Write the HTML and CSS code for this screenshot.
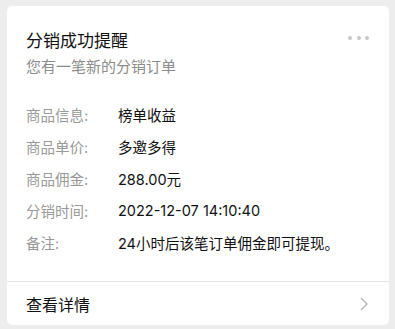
FILE: index.html
```html
<!DOCTYPE html>
<html lang="zh">
<head>
<meta charset="utf-8">
<link rel="stylesheet" href="styles.css">
</head>
<body>
<div class="card">
  <div class="main">
    <div class="head">
      <div class="title">分销成功提醒</div>
      <div class="more"><span></span><span></span><span></span></div>
    </div>
    <div class="sub">您有一笔新的分销订单</div>
    <div class="rows">
      <div class="row"><div class="label">商品信息:</div><div class="value">榜单收益</div></div>
      <div class="row"><div class="label">商品单价:</div><div class="value">多邀多得</div></div>
      <div class="row"><div class="label">商品佣金:</div><div class="value">288.00元</div></div>
      <div class="row"><div class="label">分销时间:</div><div class="value">2022-12-07 14:10:40</div></div>
      <div class="row"><div class="label">备注:</div><div class="value">24小时后该笔订单佣金即可提现。</div></div>
    </div>
  </div>
  <div class="foot">
    <div class="link">查看详情</div>
    <svg class="chev" width="8" height="14" viewBox="0 0 8 14"><path d="M1 1 L7 7 L1 13" fill="none" stroke="#b2b2b2" stroke-width="1.2"/></svg>
  </div>
</div>
</body>
</html>
```
FILE: styles.css
```css
html, body { margin: 0; padding: 0; }
body {
  background: #ededed;
  width: 395px;
  height: 329px;
  padding: 6px 6px 0 7px;
  box-sizing: border-box;
  font-family: Inter, "Noto Sans CJK SC", sans-serif;
}
.card {
  background: #fff;
  border-radius: 5px;
  width: 382px;
  height: 319px;
  display: flex;
  flex-direction: column;
}
.main {
  flex: 1;
  padding: 17px 19px 0 19px;
}
.head {
  display: flex;
  justify-content: space-between;
  align-items: center;
  height: 32px;
}
.title {
  font-size: 17px;
  color: #111;
}
.more { display: flex; gap: 4.5px; margin-right: 1px; margin-top: -2px; }
.more span {
  width: 4px; height: 4px; border-radius: 50%; background: #c7c7c7;
}
.sub {
  font-size: 15px;
  color: #8c8c8c;
  line-height: 24px;
}
.rows { margin-top: 19px; }
.row {
  display: flex;
  height: 32px;
  align-items: center;
  font-size: 14.5px;
}
.label { width: 92px; color: #999; }
.value { color: #111; }
.foot {
  height: 43px;
  border-top: 1px solid #e5e5e5;
  display: flex;
  align-items: center;
  justify-content: space-between;
  padding: 0 21px 0 19px;
}
.link { font-size: 16px; color: #111; }
.chev { display: block; }
```
